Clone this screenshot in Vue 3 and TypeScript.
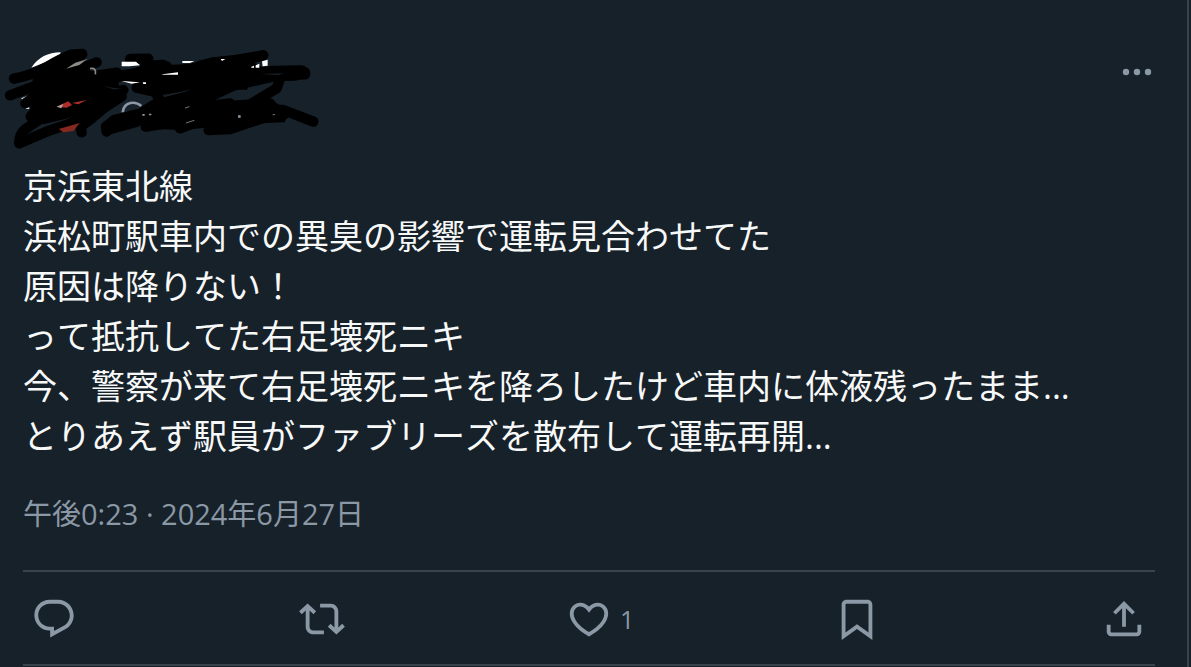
<script setup lang="ts">
interface Action {
  name: string
  path: string
  count?: number
}

const lines: string[] = [
  '京浜東北線',
  '浜松町駅車内での異臭の影響で運転見合わせてた',
  '原因は降りない！',
  'って抵抗してた右足壊死ニキ',
  '今、警察が来て右足壊死ニキを降ろしたけど車内に体液残ったまま...',
  'とりあえず駅員がファブリーズを散布して運転再開...',
]

const actions: Action[] = [
  {
    name: '返信',
    path: 'M1.751 10c0-4.42 3.584-8 8.005-8h4.366c4.49 0 8.129 3.64 8.129 8.13 0 2.96-1.607 5.68-4.196 7.11l-8.054 4.46v-3.69h-.067c-4.49.1-8.183-3.51-8.183-8.01zm8.005-6c-3.317 0-6.005 2.69-6.005 6 0 3.37 2.77 6.08 6.138 6.01l.351-.01h1.761v2.3l5.087-2.81c1.951-1.08 3.163-3.13 3.163-5.36 0-3.39-2.744-6.13-6.129-6.13H9.756z',
  },
  {
    name: 'リポスト',
    path: 'M4.5 3.88l4.432 4.14-1.364 1.46L5.5 7.55V16c0 1.1.896 2 2 2H13v2H7.5c-2.209 0-4-1.79-4-4V7.55L1.432 9.48.068 8.02 4.5 3.88zM16.5 6H11V4h5.5c2.209 0 4 1.79 4 4v8.45l2.068-1.93 1.364 1.46-4.432 4.14-4.432-4.14 1.364-1.46 2.068 1.93V8c0-1.1-.896-2-2-2z',
  },
  {
    name: 'いいね',
    path: 'M16.697 5.5c-1.222-.06-2.679.51-3.89 2.16l-.805 1.09-.806-1.09C9.984 6.01 8.526 5.44 7.304 5.5c-1.243.07-2.349.78-2.91 1.91-.552 1.12-.633 2.78.479 4.82 1.074 1.97 3.257 4.27 7.129 6.61 3.87-2.34 6.052-4.64 7.126-6.61 1.111-2.04 1.03-3.7.477-4.82-.561-1.13-1.666-1.84-2.908-1.91zm4.187 7.69c-1.351 2.48-4.001 5.12-8.379 7.67l-.503.3-.504-.3c-4.379-2.55-7.029-5.19-8.382-7.67-1.36-2.5-1.41-4.86-.514-6.67.887-1.79 2.647-2.91 4.601-3.01 1.651-.09 3.368.56 4.798 2.01 1.429-1.45 3.146-2.1 4.796-2.01 1.954.1 3.714 1.22 4.601 3.01.896 1.81.846 4.17-.514 6.67z',
    count: 1,
  },
  {
    name: 'ブックマーク',
    path: 'M4 4.5C4 3.12 5.119 2 6.5 2h11C18.881 2 20 3.12 20 4.5v18.44l-8-5.71-8 5.71V4.5zM6.5 4c-.276 0-.5.22-.5.5v14.56l6-4.29 6 4.29V4.5c0-.28-.224-.5-.5-.5h-11z',
  },
  {
    name: '共有',
    path: 'M12 2.59l5.7 5.7-1.41 1.42L13 6.41V16h-2V6.41l-3.3 3.3-1.41-1.42L12 2.59zM21 15v3.51c0 1.38-1.12 2.49-2.5 2.49H5.5C4.11 21 3 19.88 3 18.5V15h2v3.5c0 .28.22.5.5.5h13c.28 0 .5-.22.5-.5V15h2z',
  },
]
</script>

<template>
  <article class="post">
    <header class="head">
      <svg class="redacted" viewBox="0 0 1020 360" aria-hidden="true">
        <!-- edges of the avatar and handle behind the marker -->
        <path d="M94 98Q125 52 182 52L178 66L140 80Z" fill="#fff" />
        <path d="M64 190L82 182L88 222L78 222Z" fill="#dfe5e8" />
        <path d="M368 232C372 198 407 198 424 213" fill="none" stroke="#8b98a5" stroke-width="8" />
        <!-- marker strokes -->
        <g class="marker">
          <path d="M42 131Q100 119 142 95T214 59L247 57" />
          <path d="M30 181L100 155L200 120L290 82" />
          <path d="M76 205L210 105L270 125L350 113" />
          <path d="M92 245L190 130L340 130L410 113L500 94" />
          <path d="M58 325Q57 297 78 281L150 232L260 190L370 165" />
          <path d="M58 325L150 286L270 246L365 184" />
          <path d="M245 292L242 275L275 250L320 212" />
          <path d="M390 72L445 71L435 93L490 90" />
          <path d="M365 122L440 125L600 96L720 73L790 61" />
          <path d="M320 290L318 275L345 254L395 242L460 228L560 220L690 205" />
          <path d="M320 285L410 260L430 230L480 198" />
          <path d="M410 158L460 169L545 154L630 130L750 95" />
          <path d="M470 178L484 205L560 185L640 148L745 124L885 122" />
          <path d="M560 120L600 92L640 82L740 72L788 62" />
          <path d="M565 130L700 121L820 108L905 106L915 112L915 118L830 122L700 152L620 190L520 225" />
          <path d="M838 137L830 160L775 193L735 218L645 240L540 280" />
          <path d="M437 275L520 262L650 215L810 205L814 212L735 246L626 285L690 282L780 252L850 240" />
          <path d="M780 225L850 225L940 260" />
        </g>
        <path class="mass" d="M100 112L190 67L250 63L270 108L350 115L360 165L280 232L130 268L90 230Z" />
        <path class="mass" d="M360 106L500 90L620 85L740 70L785 95L740 165L560 150L470 168L390 145Z" />
        <path class="mass" d="M425 225L560 208L690 203L825 202L860 222L855 262L770 265L540 285L425 280Z" />
        <!-- details showing through the marker -->
        <path d="M198 101L226 83L262 72L238 90Z" fill="#8f8b86" />
        <path d="M270 101Q290 97 286 118" fill="none" stroke="#8f8c82" stroke-width="5" />
        <path d="M169 215L205 199L216 210L200 218ZM216 204L260 195L235 208Z" fill="#ae2f29" />
        <path d="M170 215L190 207L184 220Z" fill="#a9a4a0" />
        <path d="M176 282L239 264L220 288L190 292Z" fill="#872820" />
        <path d="M365 80H408L420 91L388 94H365ZM364 138L420 142L395 146ZM428 142H438V147H430Z" fill="#fff" />
        <path d="M487 118L534 112V119H487ZM547 78H583L570 84H547ZM662 72H676L666 78Z" fill="#fff" />
        <path d="M754 95L762 92V98H754ZM767 91L778 86V98H767ZM786 79L803 74V92L788 94Z" fill="#fff" />
        <path d="M304 151L328 157L366 162L340 163Z" fill="#17212a" />
        <path d="M427 237H434V242H427ZM447 236H454V241H447ZM714 241H722V248H714Z" fill="#8b98a5" />
        <path d="M555 219L568 215M558 264L583 256M818 239H825" stroke="#6d7881" stroke-width="3" />
        <path d="M780 117L850 115L835 120Z" fill="#17212a" />
      </svg>
      <button class="more" type="button" aria-label="もっと見る">
        <svg viewBox="0 0 46 46" aria-hidden="true">
          <circle cx="12" cy="23" r="3.2" />
          <circle cx="23" cy="23" r="3.2" />
          <circle cx="34" cy="23" r="3.2" />
        </svg>
      </button>
    </header>

    <div class="content">
      <p class="text"><span v-for="line in lines" :key="line" class="line">{{ line }}</span></p>
      <a class="date" href="#"><time datetime="2024-06-27T00:23">午後0:23 · 2024年6月27日</time></a>
      <div class="actions">
        <button
          v-for="action in actions"
          :key="action.name"
          class="action"
          type="button"
          :aria-label="action.name"
        >
          <svg viewBox="0 0 24 24" aria-hidden="true"><path :d="action.path" /></svg>
          <span v-if="action.count" class="count">{{ action.count }}</span>
        </button>
      </div>
    </div>
  </article>
</template>

<style>
body {
  background: #17212a;
}
</style>

<style scoped>
.post {
  box-sizing: border-box;
  min-height: 100vh;
  margin-right: 2px;
  padding-top: 35px;
  border-right: 2px solid #38444d;
  color: #f7f9f9;
  font-family: "Open Sans", "Noto Sans CJK JP", sans-serif;
  font-kerning: none;
}

.head {
  display: flex;
  justify-content: space-between;
  align-items: flex-start;
  padding-right: 27px;
}

.redacted {
  display: block;
  width: 340px;
  height: 120px;
}

.marker {
  fill: none;
  stroke: #000;
  stroke-width: 31px;
  stroke-linecap: round;
  stroke-linejoin: round;
}

.mass {
  fill: #000;
}

button {
  padding: 0;
  border: 0;
  background: none;
  color: #8b98a5;
  font: inherit;
  cursor: pointer;
}

button svg {
  display: block;
  flex: none;
  width: 46px;
  height: 46px;
  fill: currentColor;
}

.more {
  margin-top: 14px;
}

.content {
  padding: 6px 32px 0 23px;
}

.text {
  margin: 0;
  font-size: 34px;
  line-height: 50px;
}

.line {
  display: block;
}

.date {
  display: block;
  margin-top: 33px;
  color: #8b98a5;
  font-size: 29px;
  line-height: 40px;
  text-decoration: none;
}

.actions {
  display: flex;
  justify-content: space-between;
  margin-top: 36px;
  padding: 24px 8px 22px;
  border-top: 2px solid #38444d;
  border-bottom: 2px solid #38444d;
}

.action {
  display: flex;
  align-items: center;
  width: 46px;
}

.count {
  flex: none;
  padding-left: 8px;
  font-size: 25px;
  line-height: 46px;
}
</style>
